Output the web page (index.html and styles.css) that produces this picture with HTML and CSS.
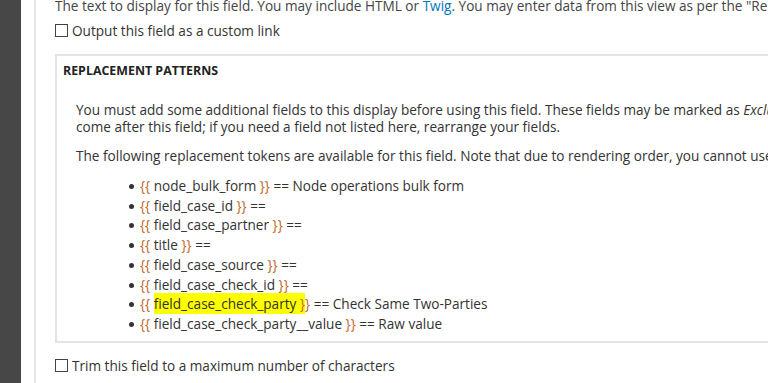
FILE: index.html
```html
<!DOCTYPE html>
<html>
<head>
<meta charset="UTF-8">
<title>Rewrite results</title>
<link rel="stylesheet" href="styles.css">
</head>
<body>
<div class="page">
  <div class="toolbar"></div>
  <div class="gutter"></div>
  <div class="main">
    <div class="desc">The text to display for this field. You may include HTML or <a href="#">Twig</a>. You may enter data from this view as per the "Replacement patterns" below.</div>
    <label class="check"><span class="box"></span>Output this field as a custom link</label>

    <div class="fieldset">
      <div class="legend">REPLACEMENT PATTERNS</div>
      <div class="fieldset-body">
        <p>You must add some additional fields to this display before using this field. These fields may be marked as <em>Exclude from display</em> if you prefer. Note that due to rendering order, you cannot use fields that<br>come after this field; if you need a field not listed here, rearrange your fields.</p>
        <p>The following replacement tokens are available for this field. Note that due to rendering order, you cannot use fields that come after this field.</p>
        <ul class="tokens">
          <li><span class="tok">{{</span> node_bulk_form <span class="tok">}}</span> == Node operations bulk form</li>
          <li><span class="tok">{{</span> field_case_id <span class="tok">}}</span> ==</li>
          <li><span class="tok">{{</span> field_case_partner <span class="tok">}}</span> ==</li>
          <li><span class="tok">{{</span> title <span class="tok">}}</span> ==</li>
          <li><span class="tok">{{</span> field_case_source <span class="tok">}}</span> ==</li>
          <li><span class="tok">{{</span> field_case_check_id <span class="tok">}}</span> ==</li>
          <li><span class="tok">{{</span> <mark>field_case_check_party <span class="tok">}</span></mark><span class="tok">}</span> == Check Same Two-Parties</li>
          <li><span class="tok">{{</span> field_case_check_party__value <span class="tok">}}</span> == Raw value</li>
        </ul>
      </div>
    </div>

    <label class="check trim"><span class="box"></span>Trim this field to a maximum number of characters</label>
  </div>
</div>
</body>
</html>
```

FILE: styles.css
```css
html, body {
	margin: 0;
	padding: 0;
	background: #fff;
	overflow: hidden;
}
body {
	font-family: "Open Sans", "DejaVu Sans", sans-serif;
	font-size: 13.6px;
	color: #333;
}
.page {
	display: flex;
	height: 383px;
}
.toolbar {
	width: 21px;
	flex: none;
	background: #474747;
}
.gutter {
	width: 13px;
	flex: none;
	border-right: 2px solid #e6e6e6;
}
.main {
	flex: none;
	width: 1200px;
	padding-left: 19px;
	white-space: nowrap;
}
.desc {
	margin-top: -3px;
	line-height: 17px;
	color: #444;
}
.desc a {
	color: #0074bd;
	text-decoration: none;
}
.check {
	display: flex;
	align-items: center;
	margin-top: 8px;
	line-height: 17px;
	color: #333;
}
.box {
	width: 11px;
	height: 11px;
	border: 1px solid #444;
	margin-right: 4px;
	flex: none;
}
.fieldset {
	margin-top: 15px;
	border: 2px solid #e4e4e4;
	border-right: 0;
}
.legend {
	padding: 7px 0 0 6px;
	font-weight: bold;
	font-size: 12.4px;
	line-height: 16px;
	color: #222;
}
.fieldset-body {
	padding: 22px 0 7px 19px;
}
.fieldset-body p {
	margin: 0 0 12px 0;
	line-height: 17px;
}
.tokens {
	margin: 0;
	padding-left: 64px;
	list-style: none;
}
.tokens li {
	line-height: 19.7px;
	position: relative;
}
.tokens li::before {
	content: "";
	position: absolute;
	left: -11px;
	top: 8px;
	width: 5px;
	height: 5px;
	border-radius: 50%;
	background: #333;
}
.tok {
	color: #c0671d;
}
mark {
	background: #ffff00;
	color: #333;
	padding: 1px 0;
}
.trim {
	margin-top: 14px;
}
```
